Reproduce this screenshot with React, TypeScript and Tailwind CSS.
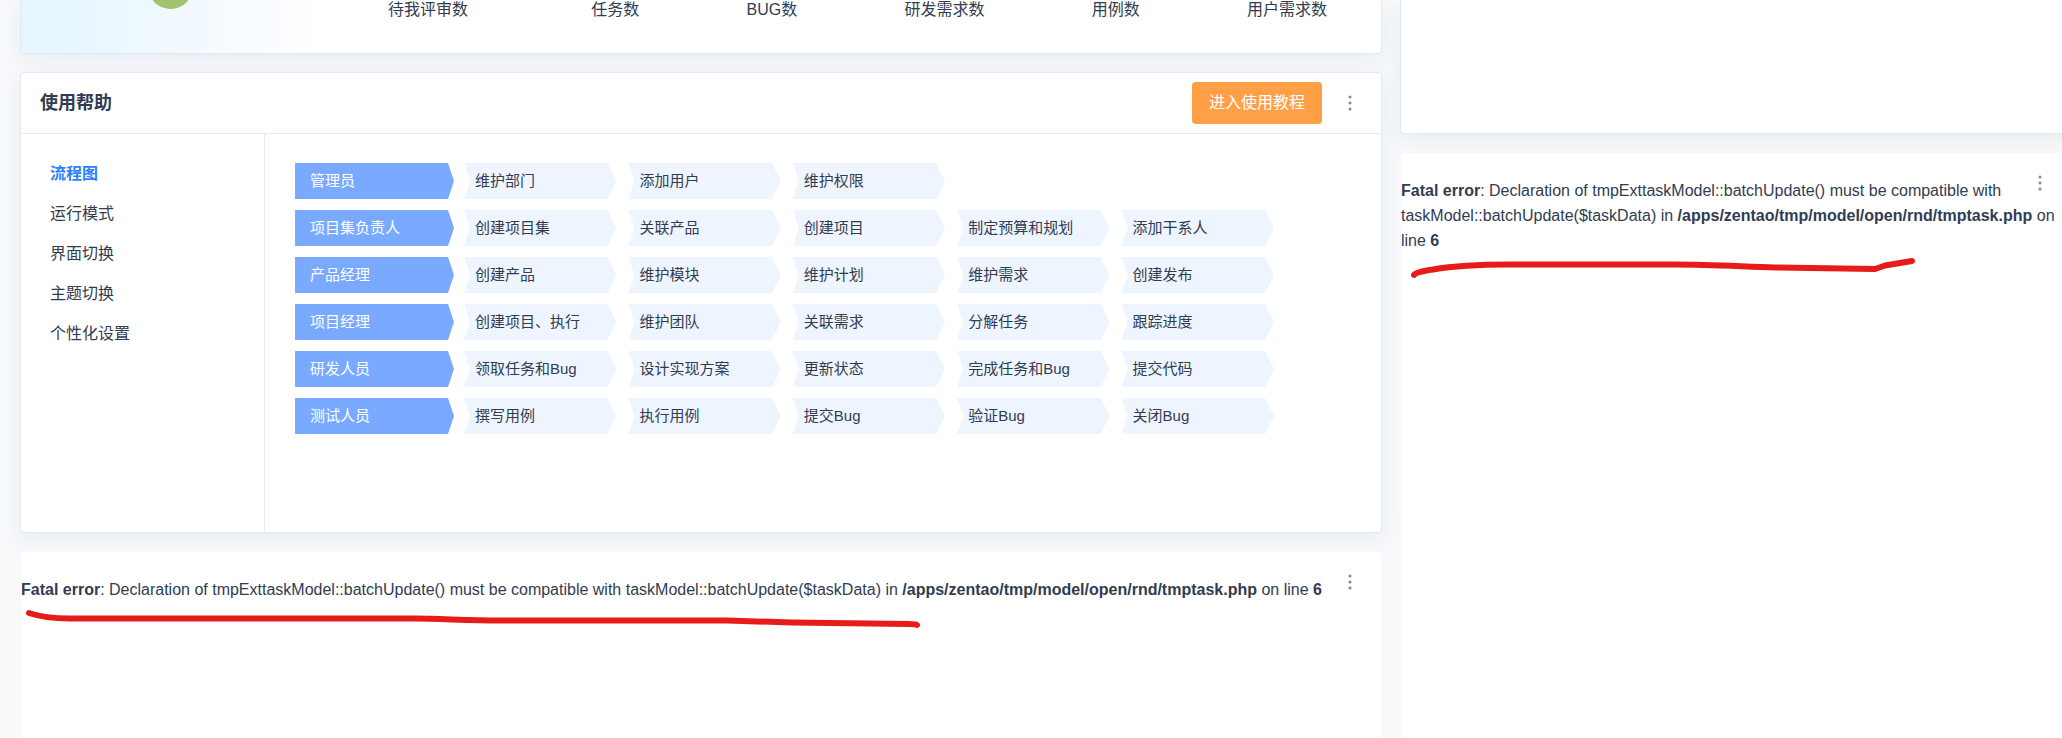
import type { ReactNode } from "react";

const stats = ["待我评审数", "任务数", "BUG数", "研发需求数", "用例数", "用户需求数"];

const helpTabs = ["流程图", "运行模式", "界面切换", "主题切换", "个性化设置"];

const flows = [
  { role: "管理员", steps: ["维护部门", "添加用户", "维护权限"] },
  { role: "项目集负责人", steps: ["创建项目集", "关联产品", "创建项目", "制定预算和规划", "添加干系人"] },
  { role: "产品经理", steps: ["创建产品", "维护模块", "维护计划", "维护需求", "创建发布"] },
  { role: "项目经理", steps: ["创建项目、执行", "维护团队", "关联需求", "分解任务", "跟踪进度"] },
  { role: "研发人员", steps: ["领取任务和Bug", "设计实现方案", "更新状态", "完成任务和Bug", "提交代码"] },
  { role: "测试人员", steps: ["撰写用例", "执行用例", "提交Bug", "验证Bug", "关闭Bug"] },
];

function MoreButton() {
  return (
    <button type="button" aria-label="更多" className="flex size-8 items-center justify-center text-[#838a9d]">
      <svg width="4" height="16" viewBox="0 0 4 16" fill="currentColor">
        <circle cx="2" cy="2" r="1.5" />
        <circle cx="2" cy="8" r="1.5" />
        <circle cx="2" cy="14" r="1.5" />
      </svg>
    </button>
  );
}

function WelcomeCard() {
  return (
    <section className="flex overflow-hidden rounded-b-sm border border-t-0 border-[#e4e7ec] bg-white bg-linear-to-r from-[#e6f5ff] from-3% to-white to-22% pb-[33px] shadow-[0_6px_20px_rgba(50,90,130,0.08)]">
      <div className="flex w-[298px] justify-center">
        <div className="-mt-9 size-[45px] rounded-full bg-[#a2c36d]" />
      </div>
      <ul className="flex flex-1 justify-between pl-[69px] pr-[54px] leading-5">
        {stats.map((stat) => (
          <li key={stat} className="first:mr-4">{stat}</li>
        ))}
      </ul>
    </section>
  );
}

function HelpCard() {
  return (
    <section className="rounded-sm border border-[#e4e7ec] bg-white shadow-[0_6px_20px_rgba(50,90,130,0.08)]">
      <header className="flex h-[61px] items-center border-b border-[#e8eaee] pl-[19px] pr-[15px]">
        <h2 className="flex-1 text-lg font-bold">使用帮助</h2>
        <button type="button" className="mr-3 h-[42px] rounded-sm bg-[#ff9f46] px-[17px] text-white">
          进入使用教程
        </button>
        <MoreButton />
      </header>

      <div className="flex">
        <nav className="flex w-[244px] shrink-0 flex-col border-r border-[#e8eaee] pl-[29px] pt-5">
          {helpTabs.map((tab, index) => (
            <a key={tab} href="#" className={index === 0 ? "font-bold leading-10 text-[#2e7fff]" : "leading-10"}>
              {tab}
            </a>
          ))}
        </nav>

        <div className="flex flex-1 flex-col gap-[11px] pb-[98px] pl-[30px] pr-[107px] pt-[29px] text-[15px] leading-9">
          {flows.map((flow) => (
            <div key={flow.role} className="flex gap-[10px]">
              <div className="w-[159px] bg-[#79aaff] pl-[15px] text-white [clip-path:polygon(0_0,calc(100%-6px)_0,100%_50%,calc(100%-6px)_100%,0_100%)]">
                {flow.role}
              </div>
              <ol className="grid flex-1 grid-cols-5 gap-3">
                {flow.steps.map((step) => (
                  <li
                    key={step}
                    className="whitespace-nowrap bg-[#eef5ff] pl-[11px] [clip-path:polygon(0_0,calc(100%-9px)_0,100%_50%,calc(100%-9px)_100%,0_100%,6px_50%)]"
                  >
                    {step}
                  </li>
                ))}
              </ol>
            </div>
          ))}
        </div>
      </div>
    </section>
  );
}

function ErrorCard({ children }: { children: ReactNode }) {
  return (
    <section className="relative flex-1 rounded-t-sm border border-b-0 border-transparent bg-white bg-clip-padding pt-[25px]">
      <p className="leading-[25px]">
        <b>Fatal error</b>: Declaration of tmpExttaskModel::batchUpdate() must be compatible with
        taskModel::batchUpdate($taskData) in <b>/apps/zentao/tmp/model/open/rnd/tmptask.php</b> on line <b>6</b>
      </p>
      <div className="absolute right-[15px] top-[14px]">
        <MoreButton />
      </div>
      {children}
    </section>
  );
}

function Marker({ d }: { d: string }) {
  return (
    <svg className="pointer-events-none absolute left-0 top-0" width="920" height="140" fill="none">
      <path d={d} stroke="#e81b1b" strokeWidth="6" strokeLinecap="round" strokeLinejoin="round" />
    </svg>
  );
}

export default function App() {
  return (
    <div className="h-screen overflow-hidden bg-[#f7f9fb] font-['Liberation_Sans','Noto_Sans_CJK_SC',sans-serif] text-base text-[#313c52]">
      {/* the right column runs a little past the window edge */}
      <main className="-mr-[10px] grid h-full grid-cols-[1362fr_672fr] gap-[18px] pl-5">
        <div className="flex flex-col gap-[18px]">
          <WelcomeCard />
          <HelpCard />
          <ErrorCard>
            <Marker d="M8 61C20 65 32 66.5 48 66.5H394C420 66.5 445 68.5 480 68.5H706L771 70.5L888 72Q895 72 896 73" />
          </ErrorCard>
        </div>

        <div className="flex flex-col gap-[18px]">
          <section className="h-[134px] rounded-b-sm border border-t-0 border-[#e4e7ec] bg-white shadow-[0_6px_20px_rgba(50,90,130,0.08)]" />
          <ErrorCard>
            <Marker d="M13 122Q14 119 32 116.5C58 112 80 111.5 108 111.5H273C310 111.5 340 113.5 374 114.5L474 116L484 112.5L511 108" />
          </ErrorCard>
        </div>
      </main>
    </div>
  );
}
